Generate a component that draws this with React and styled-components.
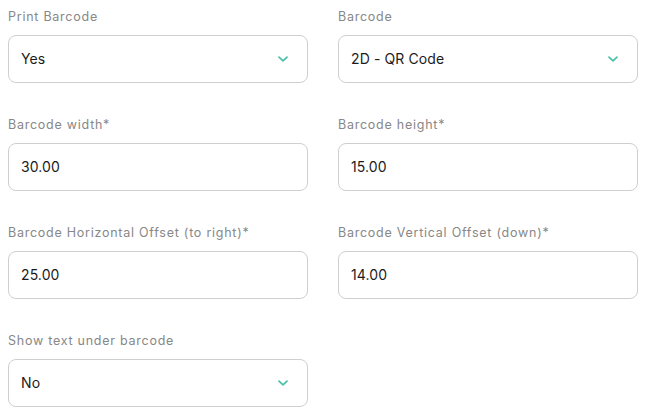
import React from "react";
import styled, { createGlobalStyle } from "styled-components";

const Global = createGlobalStyle`
  body {
    margin: 0;
    background: #ffffff;
    font-family: Inter, "Noto Sans", Arial, sans-serif;
  }
`;

const Form = styled.div`
  display: grid;
  grid-template-columns: 300px 300px;
  column-gap: 30px;
  row-gap: 33px;
  padding: 8px;
`;

const Field = styled.div`
  display: flex;
  flex-direction: column;
  gap: 10px;
`;

const Label = styled.label`
  font-size: 12.5px;
  line-height: 17px;
  color: #878787;
  letter-spacing: 0.75px;
`;

const Box = styled.div`
  box-sizing: border-box;
  height: 48px;
  border: 1px solid #cfcfcf;
  border-radius: 8px;
  display: flex;
  align-items: center;
  justify-content: space-between;
  padding: 0 18px 0 12px;
  font-size: 14px;
  color: #1c1c1c;
  background: #fff;
`;

const Value = styled.span`
  line-height: 20px;
  letter-spacing: 0.1px;
`;

const Chevron = () => (
  <svg width="12" height="8" viewBox="0 0 12 8" fill="none">
    <path d="M2 2.2 L6 5.8 L10 2.2" stroke="#4cc2ad" strokeWidth="1.8" strokeLinecap="round" strokeLinejoin="round" />
  </svg>
);

const fields = [
  { label: "Print Barcode", value: "Yes", select: true },
  { label: "Barcode", value: "2D - QR Code", select: true },
  { label: "Barcode width*", value: "30.00" },
  { label: "Barcode height*", value: "15.00" },
  { label: "Barcode Horizontal Offset (to right)*", value: "25.00" },
  { label: "Barcode Vertical Offset (down)*", value: "14.00" },
  { label: "Show text under barcode", value: "No", select: true },
];

export default function App() {
  return (
    <>
      <Global />
      <Form>
        {fields.map((f) => (
          <Field key={f.label}>
            <Label>{f.label}</Label>
            <Box>
              <Value>{f.value}</Value>
              {f.select && <Chevron />}
            </Box>
          </Field>
        ))}
      </Form>
    </>
  );
}
